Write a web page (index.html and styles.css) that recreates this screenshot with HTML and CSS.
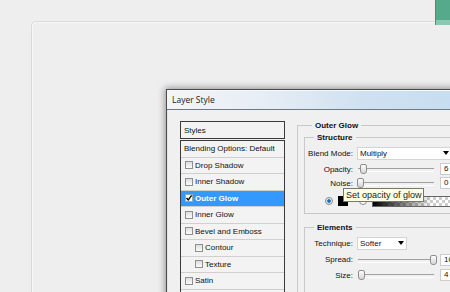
FILE: index.html
```html
<!DOCTYPE html>
<html>
<head>
<meta charset="utf-8">
<link rel="stylesheet" href="styles.css">
</head>
<body>
<div class="accent"></div>
<div class="desk">
  <div class="dialog">
    <div class="titlebar">Layer Style</div>
    <div class="client">
      <div class="sidebar">
        <div class="styles-head">Styles</div>
        <ul class="fx-list">
          <li class="fx head">Blending Options: Default</li>
          <li class="fx"><span class="cb"></span>Drop Shadow</li>
          <li class="fx"><span class="cb"></span>Inner Shadow</li>
          <li class="fx selected"><span class="cb checked"><svg viewBox="0 0 8 8" width="8" height="8"><path d="M1.5 4 L3.3 6 L6.6 1.4" fill="none" stroke="#000" stroke-width="1.4"/></svg></span>Outer Glow</li>
          <li class="fx"><span class="cb"></span>Inner Glow</li>
          <li class="fx"><span class="cb"></span>Bevel and Emboss</li>
          <li class="fx sub"><span class="cb"></span>Contour</li>
          <li class="fx sub"><span class="cb"></span>Texture</li>
          <li class="fx"><span class="cb"></span>Satin</li>
          <li class="fx"></li>
        </ul>
      </div>
      <div class="settings">
        <div class="group outer">
          <span class="group-title">Outer Glow</span>
          <div class="group sub structure">
            <span class="group-title">Structure</span>
            <div class="rows">
              <div class="row r16">
                <span class="lbl">Blend Mode:</span>
                <div class="select wide"><span>Multiply</span><i class="caret"></i></div>
              </div>
              <div class="row r16">
                <span class="lbl">Opacity:</span>
                <div class="slider"><span class="thumb" style="left:3px"></span></div>
                <span class="val">6</span>
              </div>
              <div class="row r12">
                <span class="lbl">Noise:</span>
                <div class="slider"><span class="thumb" style="left:0px"></span></div>
                <span class="val">0</span>
              </div>
              <div class="row r24 colors">
                <span class="radio on"></span>
                <span class="swatch"></span>
                <span class="radio"></span>
                <span class="grad"></span>
              </div>
            </div>
          </div>
          <div class="group sub elements">
            <span class="group-title">Elements</span>
            <div class="rows">
              <div class="row r16">
                <span class="lbl">Technique:</span>
                <div class="select narrow"><span>Softer</span><i class="caret"></i></div>
              </div>
              <div class="row r17">
                <span class="lbl">Spread:</span>
                <div class="slider"><span class="thumb" style="left:73px"></span></div>
                <span class="val">10</span>
              </div>
              <div class="row r14">
                <span class="lbl">Size:</span>
                <div class="slider"><span class="thumb" style="left:1px"></span></div>
                <span class="val">4</span>
              </div>
            </div>
          </div>
        </div>
      </div>
    </div>
  </div>
</div>
<div class="tooltip">Set opacity of glow</div>
</body>
</html>
```
FILE: styles.css
```css
* { box-sizing: border-box; }
html, body { margin: 0; height: 292px; overflow: hidden; }
body {
  background: #eeeeee;
  font-family: "Liberation Sans", Arial, sans-serif;
  font-size: 8px;
  color: #111;
  position: relative;
}
.accent {
  position: absolute;
  top: 0;
  right: 0;
  width: 15px;
  height: 25px;
  background: linear-gradient(#56aa8c 0 20px, #8dc7b1 20px);
  border-left: 1px solid #3f957a;
}
.desk {
  margin: 21px 0 0 31px;
  height: 400px;
  border: 1px solid #dadada;
  border-right: none;
  border-radius: 5px 0 0 0;
  box-shadow: inset 1px 1px 0 #f8f8f8;
  padding: 67px 0 0 134px;
}
.dialog {
  width: 330px;
  border: 1px solid #4b4b4b;
  box-shadow: 0 0 7px 1px rgba(0, 0, 0, 0.4);
  background: #f0f0f0;
}
.titlebar {
  height: 20px;
  border-bottom: 1px solid #6e7a86;
  background: linear-gradient(90deg, #f4f5f6 0%, #e6edf4 30%, #cfe1f1 60%, #c3dbf0 100%);
  box-shadow: inset 0 1px 0 #f6f9fc;
  padding-left: 5px;
  display: flex;
  align-items: center;
  font-family: "Open Sans", "Liberation Sans", sans-serif;
  font-size: 8.5px;
  color: #1a1a1a;
}
.client {
  display: flex;
  align-items: flex-start;
  gap: 12px;
  padding: 11px 0 0 13px;
  height: 300px;
  box-shadow: inset 1px 0 0 #e4e4e4;
}
.sidebar { width: 105px; flex: none; }
.styles-head {
  height: 18px;
  border: 1px solid #3a3a3a;
  padding-left: 3px;
  display: flex;
  align-items: center;
  background: #f3f3f3;
}
.fx-list {
  margin: 1px 0 0;
  padding: 0;
  list-style: none;
  border: 1px solid #3a3a3a;
  background: #f3f3f3;
}
.fx {
  height: 16.5px;
  border-bottom: 1px solid #cfcfcf;
  display: flex;
  align-items: center;
  gap: 2px;
  padding-left: 4px;
}
.fx.head { padding-left: 3px; }
.fx.sub { padding-left: 14px; }
.fx.selected {
  background: #3399ff;
  color: #fff;
  font-weight: bold;
}
.cb {
  width: 8px;
  height: 8px;
  border: 1px solid #8e8f8f;
  background: linear-gradient(#dedede, #fbfbfb);
  flex: none;
  display: flex;
}
.cb svg { display: block; margin: -1px; }
.cb.checked { background: #fff; border-color: #9aa; }
.settings { flex: 1; padding-top: 4px; }
.group {
  border-top: 1px solid #c8c8c8;
  border-left: 1px solid #c8c8c8;
}
.group.outer { padding-left: 6px; height: 300px; }
.group-title {
  display: block;
  width: max-content;
  height: 11px;
  line-height: 11px;
  margin: -6px 0 0 8px;
  padding: 0 3px;
  background: #f0f0f0;
  font-weight: bold;
}
.group.sub { border-bottom: 1px solid #c8c8c8; }
.group.sub .group-title { margin-left: 9px; }
.structure { margin-top: 6px; }
.elements { margin-top: 13px; height: 80px; }
.rows { padding-top: 2px; }
.row { display: flex; align-items: center; }
.r12 { height: 12px; }
.r14 { height: 14px; }
.r16 { height: 16px; }
.r17 { height: 17px; }
.r24 { height: 24px; }
.lbl { width: 48px; text-align: right; margin-right: 4px; flex: none; }
.select {
  height: 13px;
  background: #fff;
  border: 1px solid #d4d4d4;
  display: flex;
  align-items: center;
  justify-content: space-between;
  padding: 0 2px 0 2px;
  flex: none;
}
.select.wide { width: 95px; }
.select.narrow { width: 50px; }
.caret {
  width: 0;
  height: 0;
  border-left: 3px solid transparent;
  border-right: 3px solid transparent;
  border-top: 4px solid #000;
}
.slider {
  width: 77px;
  height: 12px;
  position: relative;
  flex: none;
}
.slider::before {
  content: "";
  position: absolute;
  left: 1px;
  right: 0;
  top: 5px;
  height: 2px;
  border-top: 1px solid #a0a0a0;
  border-bottom: 1px solid #ffffff;
}
.thumb {
  position: absolute;
  top: 1px;
  width: 7px;
  height: 10px;
  border: 1px solid #8d8d8d;
  border-radius: 2px 2px 3px 3px;
  background: linear-gradient(#fdfdfd, #d6d6d6);
}
.val {
  width: 20px;
  height: 12px;
  margin-left: 6px;
  background: #fff;
  border: 1px solid #cccccc;
  padding-left: 3px;
  line-height: 10px;
  flex: none;
}
.colors { padding-left: 20px; }
.radio {
  width: 8px;
  height: 8px;
  border-radius: 50%;
  border: 1px solid #8b8b8b;
  background: #fff;
  flex: none;
}
.radio.on { background: radial-gradient(circle, #1b6db3 0 35%, #d6e7f5 45%); }
.swatch {
  width: 10px;
  height: 10px;
  margin-left: 5px;
  background: #000;
  flex: none;
}
.colors .radio:not(.on) { margin-left: 11px; }
.grad {
  width: 100px;
  height: 11px;
  margin-left: 5px;
  border: 1px solid #666;
  flex: none;
  background:
    linear-gradient(90deg, #000 0%, rgba(0, 0, 0, 0) 60%),
    repeating-conic-gradient(#ffffff 0 25%, #cdcdcd 0 50%) 0 0 / 6px 6px;
}
.tooltip {
  position: absolute;
  left: 343px;
  top: 188px;
  width: 81px;
  height: 14px;
  border: 1px solid #767676;
  background: #ffffe1;
  font-size: 9px;
  line-height: 12px;
  padding-left: 2px;
  color: #222;
  white-space: nowrap;
}
```
